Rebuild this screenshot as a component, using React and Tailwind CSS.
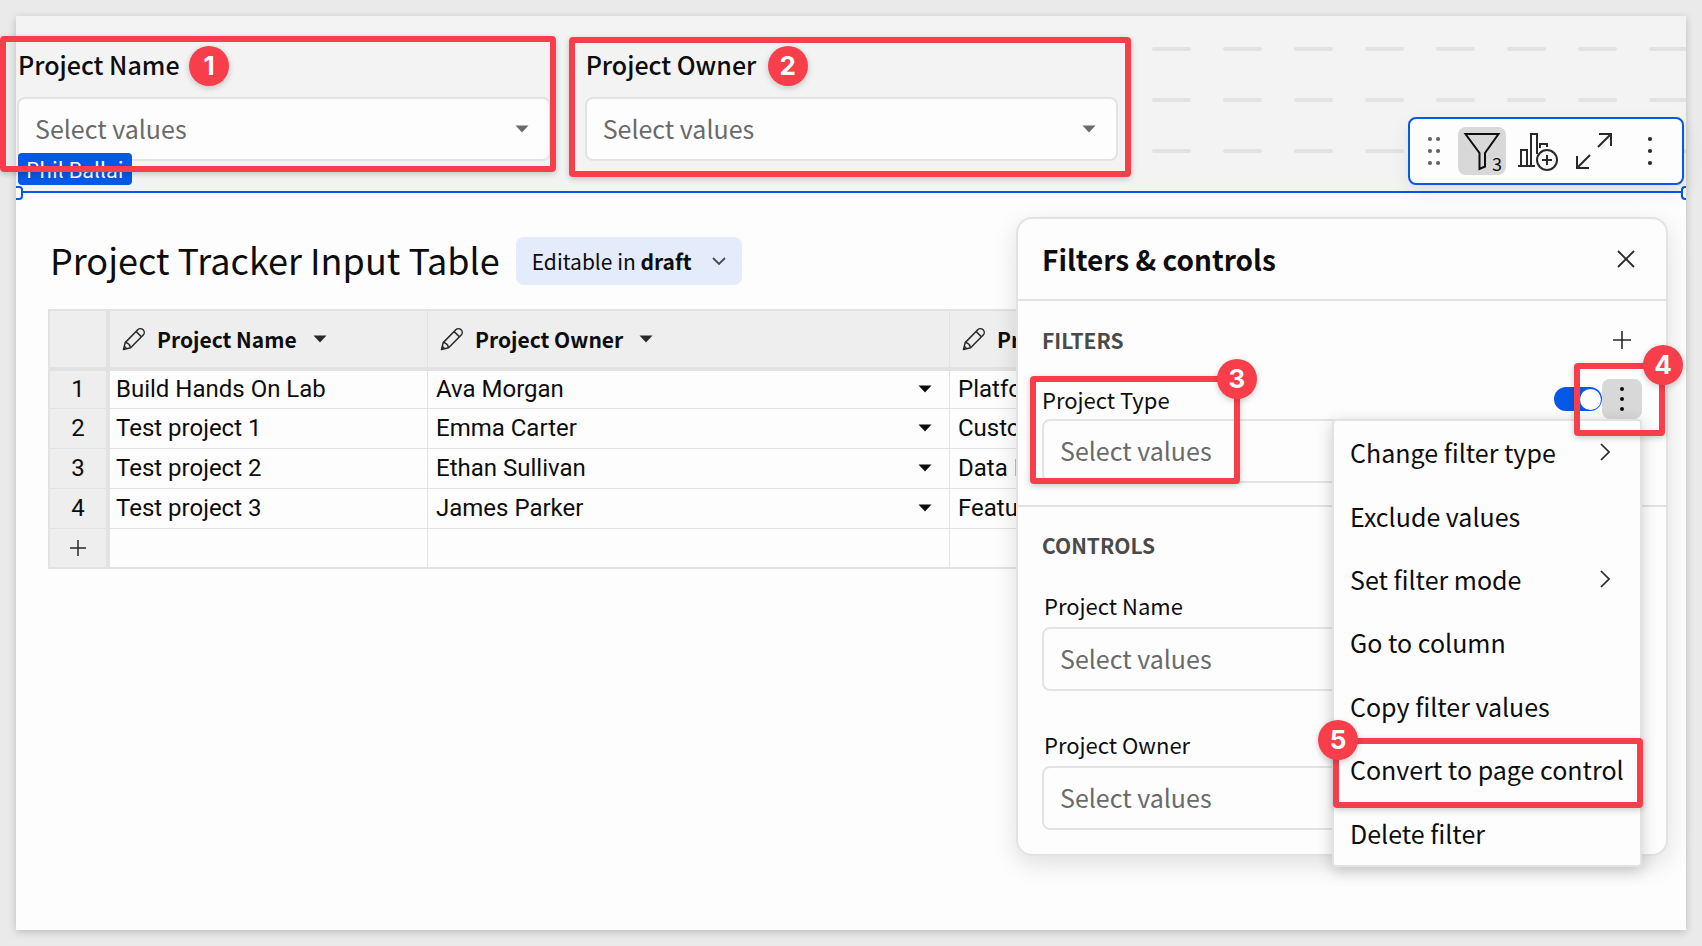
import React from "react";

const RED = "border-[#f83e4a]";

function Caret({ className = "" }) {
  return (
    <svg aria-hidden="true" viewBox="0 0 14 8" className={"h-2 w-3.5 shrink-0 " + className}>
      <path d="M0.5 0.5h13L7 7.5z" fill="currentColor" />
    </svg>
  );
}

function Pencil() {
  return (
    <svg aria-hidden="true" viewBox="0 0 24 24" className="size-6 shrink-0" fill="none" stroke="#292929" strokeWidth="1.5" strokeLinejoin="round">
      <path d="M1.5 22.5 3.2 15.6 15.8 2.8a3.6 3.6 0 0 1 5.4 5.2L8.6 20.8z" />
      <path d="M3.4 15.6c2.8.6 4.6 2.4 5 5M14.2 4.6l5.2 5.2M1.5 22.5l2.6-2.6" />
    </svg>
  );
}

function Callout({ box, badge, n }) {
  return (
    <>
      <span className={"pointer-events-none absolute z-20 rounded-[4px] border-6 shadow-[0_2px_6px_rgba(0,0,0,0.2)] " + RED + " " + box} />
      <span className={"pointer-events-none absolute z-20 flex size-10 items-center justify-center rounded-full bg-[#f83e4a] font-['Inter',sans-serif] text-[26px] leading-none font-bold text-white shadow-[0_2px_6px_rgba(0,0,0,0.2)] " + badge}>
        {n}
      </span>
    </>
  );
}

function ValueSelect({ id }) {
  return (
    <div className="relative">
      <select id={id} className="h-16 w-full appearance-none rounded-lg border-2 border-[#e3e3e3] bg-[#fdfdfd] pr-12 pb-0.5 pl-4 text-[25px] leading-9 text-[#6a6a6a]">
        <option>Select values</option>
      </select>
      <Caret className="pointer-events-none absolute top-7 right-[22px] text-[#6a6a6a]" />
    </div>
  );
}

function PageControl({ id, label, children }) {
  return (
    <div className="relative">
      <label htmlFor={id} className="mb-[15px] block pl-px text-[25px] leading-9 font-medium">
        {label}
      </label>
      <ValueSelect id={id} />
      {children}
    </div>
  );
}

function Dashes() {
  return (
    <div aria-hidden="true" className="flex flex-col gap-[47px] overflow-hidden pt-px">
      {[0, 1, 2].map((r) => (
        <div key={r} className="flex gap-8">
          {[0, 1, 2, 3, 4, 5, 6, 7].map((c) => (
            <span key={c} className="h-1 w-[39px] shrink-0 rounded-full bg-[#e2e2e2]" />
          ))}
        </div>
      ))}
    </div>
  );
}

function Toolbar() {
  return (
    <div className="absolute right-0.5 bottom-1.5 z-10 flex h-[68px] items-center rounded-lg border-2 border-[#0559e6] bg-[#fdfdfd] pr-2 shadow-[0_8px_20px_rgba(0,0,0,0.08)]">
      <button aria-label="Move" className="flex size-12 items-center justify-center">
        <svg viewBox="0 0 12 30" className="h-[30px] w-3" fill="#666">
          {[3, 15, 27].map((y) => (
            <g key={y}>
              <circle cx="2" cy={y} r="2.1" />
              <circle cx="10" cy={y} r="2.1" />
            </g>
          ))}
        </svg>
      </button>
      <button aria-label="Filters" className="relative size-12 rounded-lg bg-[#d8d8d8]">
        <svg viewBox="0 0 48 48" className="size-12" fill="none" stroke="#0d0d0d" strokeWidth="2">
          <path d="M7.5 7h33L27 26v13.5L21.5 42V26z" />
        </svg>
        <span className="absolute right-1 bottom-0.5 text-[18px] leading-5">3</span>
      </button>
      <button aria-label="Add child element" className="ml-2 size-12">
        <svg viewBox="0 0 48 48" className="size-12" fill="none" stroke="#292929" strokeWidth="2">
          <path d="M4 39h17M7 39V23h6v16M17 39V7h6v20M26 21v-4h7v3" />
          <circle cx="33" cy="33" r="10" />
          <path d="M33 28v10M28 33h10" />
        </svg>
      </button>
      <button aria-label="Maximize" className="ml-2 size-12">
        <svg viewBox="0 0 48 48" className="size-12" fill="none" stroke="#292929" strokeWidth="2">
          <path d="M28 20 41 7M29 7h12v12M20 28 7 41M7 29v12h12" />
        </svg>
      </button>
      <button aria-label="More" className="ml-2 flex size-12 items-center justify-center">
        <svg viewBox="0 0 6 30" className="h-[30px] w-1.5" fill="#292929">
          <circle cx="3" cy="3" r="2.1" />
          <circle cx="3" cy="15" r="2.1" />
          <circle cx="3" cy="27" r="2.1" />
        </svg>
      </button>
    </div>
  );
}

const rows = [
  ["Build Hands On Lab", "Ava Morgan", "Platform"],
  ["Test project 1", "Emma Carter", "Customer"],
  ["Test project 2", "Ethan Sullivan", "Data Pipeline"],
  ["Test project 3", "James Parker", "Feature"],
];

function HeaderCell({ children }) {
  return (
    <th scope="col" className="h-15 border-r border-b-4 border-[#e2e2e2] bg-[#eeeeee] p-0 pl-3 text-left text-[21px] leading-8 font-bold whitespace-nowrap">
      <div className="flex items-center">
        <Pencil />
        <span className="ml-[11px]">{children}</span>
        <button aria-label={"Menu for " + children} className="ml-4 flex text-[#292929]">
          <Caret />
        </button>
      </div>
    </th>
  );
}

const cell = "border-r border-b border-[#e2e2e2] p-0 pb-0.5 whitespace-nowrap overflow-hidden";
const indexCell = "border-r-4 border-b border-[#e2e2e2] bg-[#eeeeee] p-0 pb-0.5 text-center font-normal";

function InputTable() {
  return (
    <table className="w-[1200px] table-fixed border-separate border-spacing-0 border-2 border-[#e2e2e2]">
      <colgroup>
        <col className="w-[60px]" />
        <col className="w-[318px]" />
        <col className="w-[522px]" />
        <col />
      </colgroup>
      <thead>
        <tr>
          <td className="border-r-4 border-b-4 border-[#e2e2e2] bg-[#eeeeee]" />
          <HeaderCell>Project Name</HeaderCell>
          <HeaderCell>Project Owner</HeaderCell>
          <HeaderCell>Project Type</HeaderCell>
        </tr>
      </thead>
      <tbody className="font-['Roboto',sans-serif] text-[24px] leading-8">
        {rows.map((r, i) => (
          <tr key={r[0]} className="h-10 first:h-[38px]">
            <th scope="row" className={indexCell}>{i + 1}</th>
            <td className={cell + " pl-1.5"}>{r[0]}</td>
            <td className={cell + " pl-2"}>
              <div className="flex items-center justify-between pr-[17px]">
                {r[1]}
                <button aria-label={"Change owner of " + r[0]} className="flex">
                  <Caret />
                </button>
              </div>
            </td>
            <td className={cell + " pl-2"}>{r[2]}</td>
          </tr>
        ))}
        <tr className="h-[38px]">
          <td className="border-r-4 border-[#e2e2e2] bg-[#eeeeee] p-0">
            <button aria-label="Add row" className="flex w-full justify-center">
              <svg viewBox="0 0 16 16" className="size-4" stroke="#292929" strokeWidth="1.5">
                <path d="M8 0v16M0 8h16" />
              </svg>
            </button>
          </td>
          <td className="border-r border-[#e2e2e2]" />
          <td className="border-r border-[#e2e2e2]" />
          <td />
        </tr>
      </tbody>
    </table>
  );
}

const menuItems = [
  ["Change filter type", true],
  ["Exclude values", false],
  ["Set filter mode", true],
  ["Go to column", false],
  ["Copy filter values", false],
  ["Convert to page control", false],
  ["Delete filter", false],
];

function FilterMenu() {
  return (
    <ul className="absolute top-full right-0 z-10 flex h-[448px] w-[310px] flex-col rounded-[4px] border-2 border-[#e2e2e2] bg-[#fdfdfd] text-[25px] leading-9 shadow-[0_4px_16px_rgba(0,0,0,0.2)]">
      {menuItems.map(([name, sub]) => (
        <li key={name} className="relative flex flex-1">
          <button className="flex w-full items-center justify-between pr-[30px] pb-px pl-4 text-left whitespace-nowrap">
            <span>{name}</span>
            {sub && (
              <svg aria-hidden="true" viewBox="0 0 10 18" className="h-[18px] w-2.5" fill="none" stroke="#292929" strokeWidth="1.7">
                <path d="M1 1l8 8-8 8" />
              </svg>
            )}
          </button>
          {name === "Convert to page control" && <Callout n="5" box="-left-px -right-[3px] top-0 h-[70px]" badge="-top-[18px] -left-4" />}
        </li>
      ))}
    </ul>
  );
}

function FiltersPanel() {
  return (
    <aside className="absolute top-6 right-[18px] w-[652px] rounded-2xl border-2 border-[#e2e2e2] bg-[#fdfdfd] shadow-[0_8px_24px_rgba(0,0,0,0.12)]">
      <header className="flex h-[82px] items-center justify-between border-b-2 border-[#e2e2e2] pr-[31px] pb-px pl-6">
        <h2 className="text-[28px] leading-10 font-bold">Filters &amp; controls</h2>
        <button aria-label="Close">
          <svg viewBox="0 0 18 18" className="size-[18px]" stroke="#292929" strokeWidth="1.8">
            <path d="M1 1l16 16M17 1L1 17" />
          </svg>
        </button>
      </header>
      <section className="border-b-2 border-[#e2e2e2] px-6 pt-[21px] pb-[22px]">
        <div className="flex h-9 items-center justify-between pr-[11px]">
          <h3 className="pb-px text-[21px] leading-8 font-bold text-[#4a4a4a]">FILTERS</h3>
          <button aria-label="Add filter">
            <svg viewBox="0 0 18 18" className="size-[18px]" stroke="#292929" strokeWidth="1.6">
              <path d="M9 0v18M0 9h18" />
            </svg>
          </button>
        </div>
        <div className="relative mt-[21px]">
          <div className="relative flex h-10 items-center">
            <label htmlFor="f-type" className="grow text-[22px] leading-8">Project Type</label>
            <input type="checkbox" role="switch" aria-label="Filter enabled" defaultChecked className="h-6 w-12 appearance-none rounded-full bg-[#0559e6]" />
            <span className="pointer-events-none absolute right-[41px] size-[21px] rounded-full bg-white" />
            <button aria-label="Filter options" className="flex size-10 items-center justify-center rounded-lg bg-[#d8d8d8]">
              <svg viewBox="0 0 6 26" className="h-[26px] w-1.5" fill="#0d0d0d">
                <circle cx="3" cy="3" r="2" />
                <circle cx="3" cy="13" r="2" />
                <circle cx="3" cy="23" r="2" />
              </svg>
            </button>
            <FilterMenu />
            <Callout n="4" box="-right-[23px] -top-4 h-[73px] w-[91px]" badge="-right-[41px] -top-[34px]" />
          </div>
          <ValueSelect id="f-type" />
          <Callout n="3" box="-left-3 -top-[3px] h-[108px] w-[210px]" badge="left-[175px] -top-5" />
        </div>
      </section>
      <section className="px-6 pt-5 pb-6">
        <h3 className="text-[21px] leading-9 font-bold text-[#4a4a4a]">CONTROLS</h3>
        <label htmlFor="c-name" className="mt-6 mb-1 block pl-0.5 text-[22px] leading-9">Project Name</label>
        <ValueSelect id="c-name" />
        <label htmlFor="c-owner" className="mt-[35px] mb-1 block pl-0.5 text-[22px] leading-9">Project Owner</label>
        <ValueSelect id="c-owner" />
      </section>
    </aside>
  );
}

export default function App() {
  return (
    <div className="min-h-screen bg-[#eaeaea] p-4 font-['Noto_Sans_CJK_SC',sans-serif] text-[#0d0d0d]">
      <main className="flex min-h-[calc(100vh-32px)] flex-col bg-[#fdfdfd] shadow-[0_2px_8px_rgba(0,0,0,0.2)]">
        <section className="relative border-b-2 border-[#0559e6] bg-[#f3f3f3] pt-[30px] pb-[30px] pl-px">
          <div className="grid grid-cols-3 gap-[34px]">
            <PageControl id="p-name" label="Project Name">
              <span className="absolute top-[107px] left-px z-10 rounded-[4px] bg-[#0559e6] px-2 text-[21px] leading-8 text-white">Phil Ballai</span>
              <Callout n="1" box="-left-[17px] -right-[5px] -top-[10px] h-[136px]" badge="left-[172px] top-0" />
            </PageControl>
            <PageControl id="p-owner" label="Project Owner">
              <Callout n="2" box="-left-[16px] -right-[13px] -top-[9px] h-[140px]" badge="left-[183px] top-0" />
            </PageControl>
            <Dashes />
          </div>
          <Toolbar />
          <span className="absolute -bottom-[9px] left-0 h-3.5 w-[7px] rounded-r-[4px] border-2 border-l-0 border-[#0559e6] bg-white" />
          <span className="absolute right-0 -bottom-[9px] h-3.5 w-[5px] rounded-l-[4px] border-2 border-r-0 border-[#0559e6] bg-white" />
        </section>
        <section className="relative grow px-8 pt-[43px]">
          <div className="mb-[23px] flex h-[50px] items-center pl-0.5">
            <h1 className="pb-1 text-[36px] leading-[50px]">Project Tracker Input Table</h1>
            <button className="ml-4 flex h-12 items-center rounded-lg bg-[#e4ebfb] px-4 text-[21px] leading-8">
              <span>
                Editable in <b className="font-bold">draft</b>
              </span>
              <svg aria-hidden="true" viewBox="0 0 14 8" className="ml-5 h-2 w-3.5" fill="none" stroke="#4a4a4a" strokeWidth="1.8">
                <path d="M1 1l6 6 6-6" />
              </svg>
            </button>
          </div>
          <div className="mr-[635px] overflow-hidden">
            <InputTable />
          </div>
          <FiltersPanel />
        </section>
      </main>
    </div>
  );
}
